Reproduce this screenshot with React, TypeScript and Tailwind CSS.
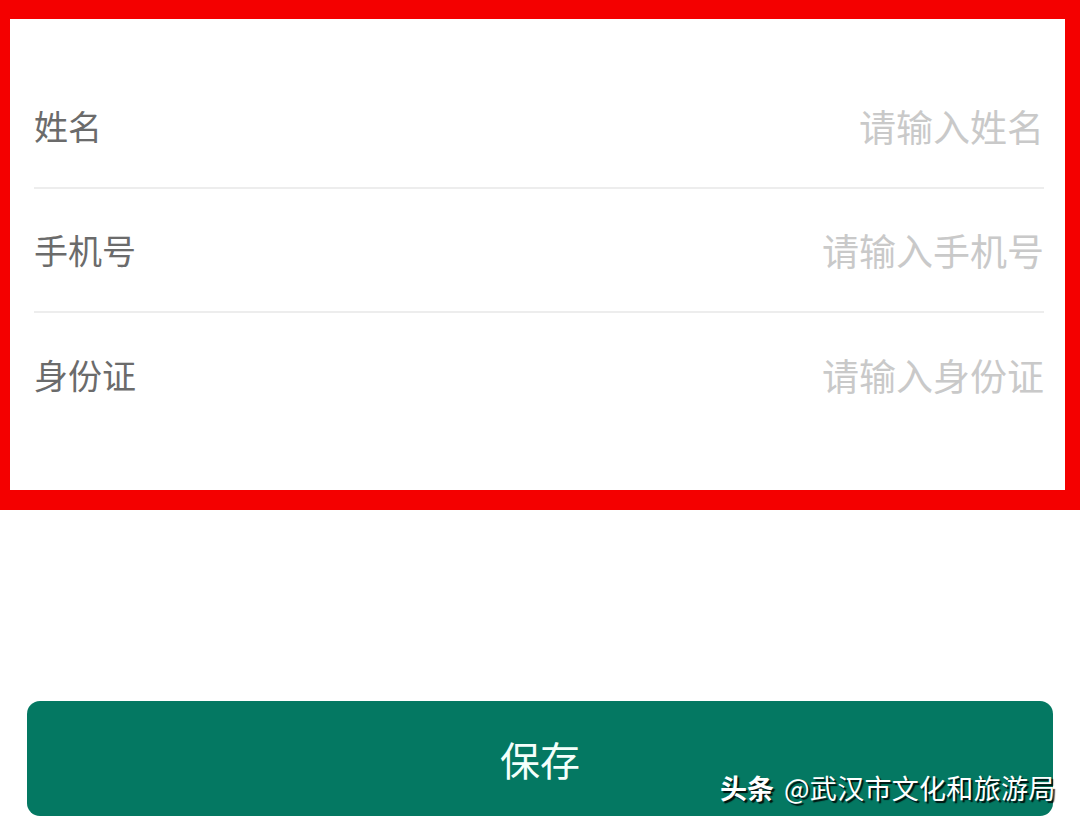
import React from "react";

const rows = [
  { label: "姓名", ph: "请输入姓名" },
  { label: "手机号", ph: "请输入手机号" },
  { label: "身份证", ph: "请输入身份证" },
];

export default function App() {
  return (
    <div
      className="relative w-[1080px] h-[831px] bg-white overflow-hidden"
      style={{ fontFamily: '"Noto Sans CJK SC", "Noto Sans", sans-serif' }}
    >
      <div className="h-[510px] border-solid border-[#f40000] border-l-[10px] border-t-[19px] border-r-[15px] border-b-[20px] bg-white">
        <div className="pl-[24px] pr-[21px] pt-[46px]">
          {rows.map((r, i) => (
            <div
              key={r.label}
              className={`flex items-center justify-between h-[124px] ${
                i < rows.length - 1 ? "border-b-2 border-[#ededed]" : ""
              }`}
            >
              <span className="text-[34px] leading-none text-[#6b6b6b]">{r.label}</span>
              <span className="text-[37px] leading-none text-[#c9c9c9]">{r.ph}</span>
            </div>
          ))}
        </div>
      </div>
      <div className="mt-[191px] ml-[27px] w-[1026px] h-[115px] rounded-[13px] bg-[#047862] flex items-center justify-center">
        <span className="text-[40px] leading-none text-[#f4fffb]">保存</span>
      </div>
      <div className="absolute left-[720px] top-[774px] flex items-center text-white text-[27px] leading-none [text-shadow:2px_2px_1px_rgba(0,0,0,0.85)]">
        <span className="font-bold">头条</span>
        <span className="ml-[10px] tracking-[0.3px]">@武汉市文化和旅游局</span>
      </div>
    </div>
  );
}
